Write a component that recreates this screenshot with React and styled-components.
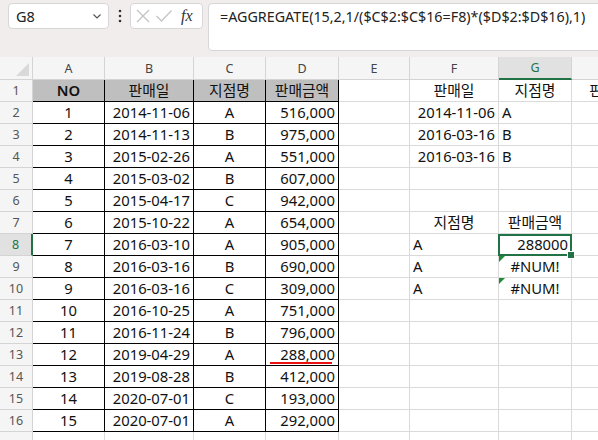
import React from 'react';
import styled, { createGlobalStyle } from 'styled-components';

const GlobalStyle = createGlobalStyle`
  body {
    margin: 0;
    background: #fff;
    font-family: "Noto Sans", "Noto Sans CJK KR", sans-serif;
  }
`;

const COLS = ['A', 'B', 'C', 'D', 'E', 'F', 'G', 'H'];

const sales = [
  [1, '2014-11-06', 'A', '516,000'],
  [2, '2014-11-13', 'B', '975,000'],
  [3, '2015-02-26', 'A', '551,000'],
  [4, '2015-03-02', 'B', '607,000'],
  [5, '2015-04-17', 'C', '942,000'],
  [6, '2015-10-22', 'A', '654,000'],
  [7, '2016-03-10', 'A', '905,000'],
  [8, '2016-03-16', 'B', '690,000'],
  [9, '2016-03-16', 'C', '309,000'],
  [10, '2016-10-25', 'A', '751,000'],
  [11, '2016-11-24', 'B', '796,000'],
  [12, '2019-04-29', 'A', '288,000'],
  [13, '2019-08-28', 'B', '412,000'],
  [14, '2020-07-01', 'C', '193,000'],
  [15, '2020-07-01', 'A', '292,000'],
];

// cells outside the source table
const extra = {
  1: { F: { v: '판매일', align: 'center' }, G: { v: '지점명', align: 'center' }, H: { v: '판매금액', align: 'center' } },
  2: { F: { v: '2014-11-06', align: 'right' }, G: { v: 'A', align: 'left' } },
  3: { F: { v: '2016-03-16', align: 'right' }, G: { v: 'B', align: 'left' } },
  4: { F: { v: '2016-03-16', align: 'right' }, G: { v: 'B', align: 'left' } },
  7: { F: { v: '지점명', align: 'center' }, G: { v: '판매금액', align: 'center' } },
  8: { F: { v: 'A', align: 'left' }, G: { v: '288000', align: 'right', active: true } },
  9: { F: { v: 'A', align: 'left' }, G: { v: '#NUM!', align: 'center', err: true } },
  10: { F: { v: 'A', align: 'left' }, G: { v: '#NUM!', align: 'center', err: true } },
};

function getCell(r, c) {
  if (r === 1 && c <= 'D') {
    const heads = { A: 'NO', B: '판매일', C: '지점명', D: '판매금액' };
    return { v: heads[c], align: 'center', table: true, head: true, bold: c === 'A' };
  }
  if (r >= 2 && r <= 16 && c <= 'D') {
    const row = sales[r - 2];
    const idx = COLS.indexOf(c);
    const align = { A: 'center', B: 'right', C: 'center', D: 'right' }[c];
    return { v: row[idx], align, table: true, mark: r === 13 && c === 'D' };
  }
  return (extra[r] && extra[r][c]) || { v: '', align: 'left' };
}

function Chevron() {
  return (
    <svg width="12" height="12" viewBox="0 0 12 12">
      <polyline points="2.5,4.5 6,8 9.5,4.5" fill="none" stroke="#555" strokeWidth="1.2" />
    </svg>
  );
}

function Dots() {
  return (
    <svg width="4" height="14" viewBox="0 0 4 14">
      <circle cx="2" cy="2" r="1.3" fill="#333" />
      <circle cx="2" cy="7" r="1.3" fill="#333" />
      <circle cx="2" cy="12" r="1.3" fill="#333" />
    </svg>
  );
}

export default function App() {
  return (
    <Page>
      <GlobalStyle />
      <TopBar>
        <NameBox>
          <span>G8</span>
          <Chevron />
        </NameBox>
        <Grip>
          <Dots />
        </Grip>
        <FxBox>
          <svg width="16" height="16" viewBox="0 0 16 16">
            <path d="M2 2 L14 14 M14 2 L2 14" stroke="#c4c4c4" strokeWidth="1.3" fill="none" />
          </svg>
          <svg width="18" height="16" viewBox="0 0 18 16">
            <polyline points="1.5,8 6.5,13 16.5,2.5" stroke="#c4c4c4" strokeWidth="1.3" fill="none" />
          </svg>
          <FxLabel>fx</FxLabel>
        </FxBox>
        <FormulaBox>=AGGREGATE(15,2,1/($C$2:$C$16=F8)*($D$2:$D$16),1)</FormulaBox>
      </TopBar>

      <Sheet>
        <Corner />
        {COLS.map((c) => (
          <ColHead key={c} $sel={c === 'G'}>
            {c}
          </ColHead>
        ))}
        {Array.from({ length: 17 }, (_, i) => {
          const r = i + 1;
          return (
            <React.Fragment key={r}>
              {/* row 17 is only a sliver at the bottom edge, its number doesn't show */}
              <RowHead $sel={r === 8}>{r < 17 ? r : ''}</RowHead>
              {COLS.map((c) => {
                const cell = getCell(r, c);
                return (
                  <Cell
                    key={c}
                    $align={cell.align}
                    $table={cell.table}
                    $head={cell.head}
                    $bold={cell.bold}
                    $err={cell.err}
                    $mark={cell.mark}
                  >
                    {cell.v}
                    {cell.active && (
                      <ActiveFrame>
                        <FillHandle />
                      </ActiveFrame>
                    )}
                  </Cell>
                );
              })}
            </React.Fragment>
          );
        })}
      </Sheet>
    </Page>
  );
}

const Page = styled.div`
  width: 598px;
  height: 440px;
  overflow: hidden;
`;

const TopBar = styled.div`
  height: 57px;
  box-sizing: border-box;
  background: #f1eded;
  display: flex;
  align-items: flex-start;
  padding: 3px 0 0 8px;
`;

const NameBox = styled.div`
  width: 101px;
  height: 26px;
  box-sizing: border-box;
  background: #fff;
  border: 1px solid #d8d6d6;
  border-radius: 4px;
  display: flex;
  align-items: center;
  justify-content: space-between;
  padding: 0 5px 0 7px;
  font-size: 14.5px;
  color: #222;
`;

const Grip = styled.div`
  width: 21px;
  height: 26px;
  display: flex;
  align-items: center;
  justify-content: center;
`;

const FxBox = styled.div`
  width: 73px;
  height: 26px;
  box-sizing: border-box;
  background: #fff;
  border: 1px solid #d8d6d6;
  border-radius: 4px;
  display: flex;
  align-items: center;
  gap: 4px;
  padding: 0 0 0 4px;
`;

const FxLabel = styled.span`
  font-family: "Liberation Serif", serif;
  font-style: italic;
  font-size: 16px;
  color: #333;
  margin-left: 4px;
`;

const FormulaBox = styled.div`
  flex: 1;
  height: 48px;
  margin-left: 5px;
  margin-right: -4px;
  box-sizing: border-box;
  background: #fff;
  border: 1px solid #d8d6d6;
  border-radius: 4px;
  padding: 2px 0 0 11px;
  font-size: 14.3px;
  line-height: 22px;
  color: #222;
  white-space: nowrap;
  overflow: hidden;
`;

const Sheet = styled.div`
  display: grid;
  grid-template-columns: 33px 72px 89px 72px 73px 71px 89px 73px 90px;
  grid-template-rows: 23px;
  grid-auto-rows: 22px;
`;

const Corner = styled.div`
  position: relative;
  background: #f5f5f5;
  border-right: 1px solid #d4d4d4;
  border-bottom: 1px solid #d4d4d4;
  box-sizing: border-box;

  &::after {
    content: '';
    position: absolute;
    right: 3px;
    bottom: 3px;
    border-style: solid;
    border-width: 0 0 13px 13px;
    border-color: transparent transparent #d9d9d9 transparent;
  }
`;

const ColHead = styled.div`
  box-sizing: border-box;
  background: ${(p) => (p.$sel ? '#e1e1e1' : '#f5f5f5')};
  border-right: 1px solid #d4d4d4;
  border-bottom: ${(p) => (p.$sel ? '2px solid #217346' : '1px solid #d4d4d4')};
  color: ${(p) => (p.$sel ? '#217346' : '#444')};
  font-size: 12.5px;
  display: flex;
  align-items: center;
  justify-content: center;
`;

const RowHead = styled.div`
  box-sizing: border-box;
  background: ${(p) => (p.$sel ? '#e1e1e1' : '#f5f5f5')};
  border-right: ${(p) => (p.$sel ? '2px solid #217346' : '1px solid #d4d4d4')};
  border-bottom: 1px solid #d4d4d4;
  color: ${(p) => (p.$sel ? '#217346' : '#555')};
  font-size: 12.5px;
  display: flex;
  align-items: center;
  justify-content: center;
`;

const justify = { left: 'flex-start', center: 'center', right: 'flex-end' };

const Cell = styled.div`
  position: relative;
  box-sizing: border-box;
  border-right: 1px solid ${(p) => (p.$table ? '#000' : '#dadada')};
  border-bottom: 1px solid ${(p) => (p.$table ? '#000' : '#dadada')};
  background: ${(p) => (p.$head ? '#bfbfbf' : '#fff')};
  display: flex;
  align-items: flex-end;
  justify-content: ${(p) => justify[p.$align]};
  padding: 0 3px 1px;
  font-size: 14.8px;
  line-height: 19px;
  font-weight: ${(p) => (p.$bold ? 600 : 400)};
  color: #111;
  white-space: nowrap;

  ${(p) =>
    p.$err &&
    `
    &::before {
      content: '';
      position: absolute;
      left: 0;
      top: 0;
      border-style: solid;
      border-width: 6px 6px 0 0;
      border-color: #1e8a3a transparent transparent transparent;
    }
  `}

  ${(p) =>
    p.$mark &&
    `
    &::after {
      content: '';
      position: absolute;
      left: 4px;
      right: 6px;
      bottom: 1px;
      height: 2px;
      background: #e81010;
    }
  `}
`;

const ActiveFrame = styled.div`
  position: absolute;
  top: 0;
  left: -1px;
  right: -1px;
  bottom: -1px;
  border: 2px solid #217346;
  z-index: 2;
`;

const FillHandle = styled.div`
  position: absolute;
  right: -5px;
  bottom: -5px;
  width: 6px;
  height: 6px;
  background: #217346;
  border: 1px solid #fff;
`;
